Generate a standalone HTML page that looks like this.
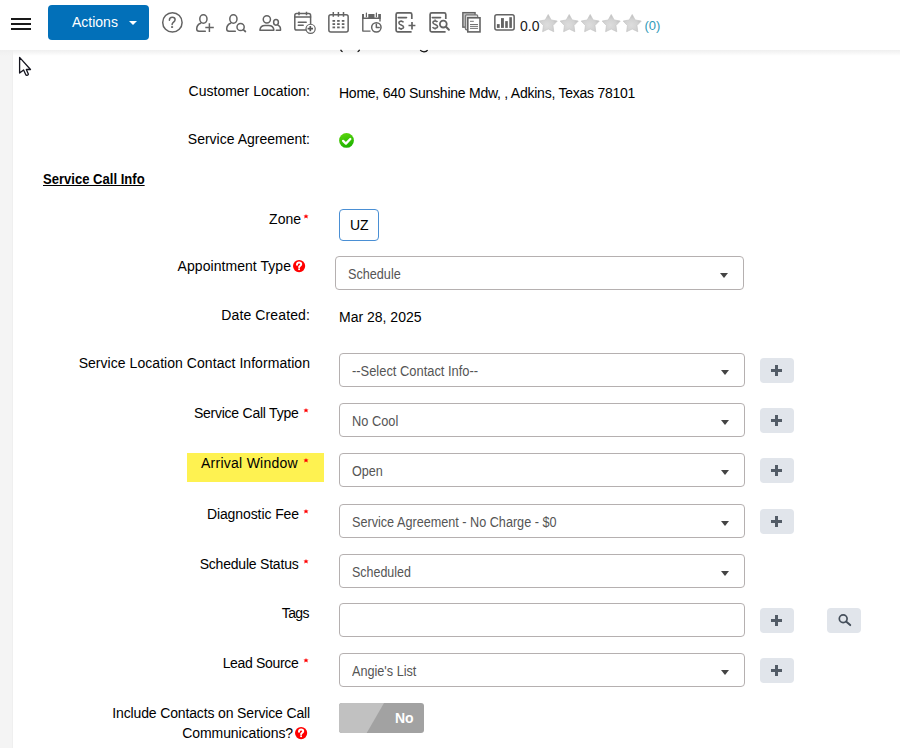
<!DOCTYPE html>
<html><head><meta charset="utf-8">
<style>
*{box-sizing:border-box;margin:0;padding:0}
html,body{width:900px;height:748px;overflow:hidden;background:#fff;font-family:"Liberation Sans",sans-serif;color:#000}
.a{position:absolute;white-space:nowrap}
#strip{position:absolute;left:0;top:50px;width:13px;height:698px;background:#f4f4f4;border-right:1px solid #efefef}
#hdr{position:absolute;left:0;top:0;width:900px;height:50px;background:#fff;z-index:5}
#shadow{position:absolute;left:0;top:50px;width:900px;height:6px;background:linear-gradient(#efefef,rgba(255,255,255,0));z-index:4}
.ham{position:absolute;left:11px;width:20px;height:2px;background:#1a1a1a}
#act{position:absolute;left:48px;top:5px;width:101px;height:35px;background:#0270b9;border-radius:4px}
.lbl{position:absolute;font-size:14px;line-height:20px;text-align:right;white-space:nowrap}
.val{position:absolute;font-size:14px;line-height:20px;white-space:nowrap}
.req{position:absolute;left:303px;width:6px;height:5px}
.sel{position:absolute;left:339px;width:406px;height:34px;border:1px solid #b5b0b0;border-radius:4px;background:#fff}
.sel .t{position:absolute;left:12px;top:7px;font-size:14px;line-height:20px;color:#555;white-space:nowrap;transform-origin:0 0}
.sel .c{position:absolute;left:381px;top:16px;width:0;height:0;border-left:4px solid transparent;border-right:4px solid transparent;border-top:5px solid #444}
.pb{position:absolute;left:760px;width:34px;height:25px;background:#e1e5eb;border-radius:4px}
.pb.p:before{content:"";position:absolute;left:11px;top:11px;width:11px;height:3px;background:#535c67}
.pb.p:after{content:"";position:absolute;left:15px;top:7px;width:3px;height:11px;background:#535c67}
.qi{position:absolute;width:13px;height:13px}
</style></head>
<body>
<div id="strip"></div>
<svg class="a" style="left:338px;top:48px;z-index:6" width="92" height="6" viewBox="338 48 92 6" fill="none" stroke="#111" stroke-width="1.2">
  <path d="M340.6 49.8Q341.2 51.2 342.6 51.8"/>
  <path d="M359.6 49.8Q359 51.2 357.6 51.8"/>
  <path d="M420.2 50.2Q421.5 51.8 424 51.8Q426.5 51.8 427.6 50.2"/>
</svg>
<div id="shadow"></div>
<svg class="a" style="left:14px;top:54px;z-index:6" width="24" height="24" viewBox="14 54 24 24"><path d="M19.6 57.4V73.1L23.6 69.9L25.9 74.9Q26.2 75.5 26.9 75.3L28 74.8Q28.6 74.5 28.3 73.9L26.3 69.5H30.5Z" fill="#fff" stroke="#15151f" stroke-width="1.3" stroke-linejoin="round"/></svg>
<div id="hdr">
  <div class="ham" style="top:18px"></div>
  <div class="ham" style="top:23px"></div>
  <div class="ham" style="top:28px"></div>
  <div id="act">
    <div class="a" style="left:24px;top:7px;font-size:14px;line-height:20px;color:#fff">Actions</div>
    <div class="a" style="left:81px;top:16px;width:0;height:0;border-left:4px solid transparent;border-right:4px solid transparent;border-top:4px solid #fff"></div>
  </div>
  <svg class="a" style="left:0;top:0" width="530" height="50" viewBox="0 0 530 50" fill="none" stroke="#636363" stroke-width="1.5" stroke-linecap="round" stroke-linejoin="round">
    <circle cx="172.4" cy="22.4" r="9.7"/>
    <path d="M169.4 20.2C169.4 18.3 170.7 17.3 172.3 17.3C174 17.3 175.1 18.4 175.1 19.8C175.1 21.6 173.3 22.1 172.5 23.3L172.1 24.5"/>
    <rect x="171.1" y="26.2" width="2" height="1.7" fill="#636363" stroke="none"/>
    <ellipse cx="203.4" cy="19" rx="3.6" ry="4.2"/>
    <path d="M200.6 23.3C197.6 24.6 196.7 27 196.7 29C196.7 30.5 197.5 31.2 199 31.2L205.3 31.2"/>
    <path d="M205.3 27.4H213.8M209.4 23.2V31.9" stroke-width="1.5" stroke-linecap="butt"/>
    <ellipse cx="233.4" cy="19" rx="3.6" ry="4.2"/>
    <path d="M230.6 23.3C227.6 24.6 226.7 27 226.7 29C226.7 30.5 227.5 31.2 229 31.2L235.3 31.2"/>
    <circle cx="240.6" cy="27" r="3.6"/>
    <path d="M243.3 29.7L245.4 31.5" stroke-width="1.7"/>
    <circle cx="266.85" cy="19.35" r="3.6"/>
    <path d="M259.9 30.2C260.2 27.3 262.4 25.6 265 25.6H268.6C271.3 25.6 273.6 27.3 273.9 30.2Z"/>
    <ellipse cx="276" cy="22.35" rx="2.4" ry="2.8"/>
    <path d="M277.8 25.1C279.6 25.7 280.5 27.3 280.5 29V30.3H276.3"/>
    <rect x="294.8" y="13.6" width="15.8" height="16.5" rx="1.8"/>
    <path d="M294.8 17H310.6M298.3 22.2H306.2M298.3 25.3H303.2"/><path d="M299 11.8V15.3M306.5 11.8V15.3" stroke-linecap="butt"/>
    <circle cx="310.6" cy="28.85" r="4.6" fill="#fff" stroke-width="1.2"/>
    <path d="M307.6 28.6H313M310.3 26.1V31.3" stroke-width="1.7" stroke="#555" stroke-linecap="butt"/>
    <rect x="328.85" y="14.75" width="19.3" height="17.2" rx="2" stroke-width="1.5"/>
    <path d="M333.3 12.1V16.8M338.4 12.1V16.8M343.5 12.1V16.8" stroke-width="1.5" stroke-linecap="butt"/>
    <g fill="#636363" stroke="none">
      <rect x="332.5" y="20" width="2.6" height="1.8"/><rect x="337.1" y="20" width="2.6" height="1.8"/><rect x="341.8" y="20" width="2.6" height="1.8"/>
      <rect x="332.5" y="23.2" width="2.6" height="1.8"/><rect x="337.1" y="23.2" width="2.6" height="1.8"/><rect x="341.8" y="23.2" width="2.6" height="1.8"/>
      <rect x="332.5" y="26.5" width="2.6" height="1.8"/><rect x="337.1" y="26.5" width="2.6" height="1.8"/><rect x="341.8" y="26.5" width="2.6" height="1.8"/>
    </g>
    <g fill="#636363" stroke="none">
      <path d="M362.1 14H364V18.7H362.1Z M368.3 14H374.5V17.6H368.3Z M378.2 14H380.7V18.7H378.2Z M362.1 17.6H380.7V18.9H362.1Z"/>
    </g>
    <path d="M366.4 13V16.7M376.4 13V16.7" stroke-width="1.2"/>
    <path d="M362.8 14V31.1H370.5M380 14V21.4" stroke-width="1.4" stroke-linecap="butt"/>
    <circle cx="376.35" cy="27.35" r="4.7"/>
    <path d="M376.35 24.2V27.5H379.2"/>
    <path d="M411.8 19V14.4Q411.8 12.8 410.2 12.8H397.7Q396.1 12.8 396.1 14.4V30.2Q396.1 31.8 397.7 31.8H411.6" stroke-width="1.7" stroke-linecap="butt"/>
    <path d="M398.3 17.6H406.5" stroke-width="1.6"/>
    <path d="M403.5 22.4C403 21.6 402.1 21.3 401.1 21.3C399.7 21.3 398.9 22 398.9 23C398.9 25.4 403.6 24.5 403.6 27C403.6 28.1 402.6 28.7 401.1 28.7C400 28.7 399.1 28.3 398.6 27.5M401.1 20.3V21.6M401.1 28.4V30" stroke-width="1.5" stroke-linecap="butt"/>
    <path d="M408.5 25.5H415.4M412 22.1V29.5" stroke-width="1.7" stroke-linecap="butt"/>
    <path d="M445.8 19V14.4Q445.8 12.8 444.2 12.8H431.7Q430.1 12.8 430.1 14.4V30.2Q430.1 31.8 431.7 31.8H445.6" stroke-width="1.7" stroke-linecap="butt"/>
    <path d="M432.3 17.6H440.5" stroke-width="1.6"/>
    <path d="M437.5 22C437 21.2 436.1 20.9 435.1 20.9C433.7 20.9 432.9 21.6 432.9 22.6C432.9 25 437.6 24.1 437.6 26.6C437.6 27.7 436.6 28.3 435.1 28.3C434 28.3 433.1 27.9 432.6 27.1M435.1 19.5V21.2M435.1 28V29.6" stroke-width="1.5" stroke-linecap="butt"/>
    <circle cx="443.3" cy="24.1" r="3.4" stroke-width="1.8"/>
    <path d="M446 26.8L448.9 29.7" stroke-width="2"/>
    <rect x="462.85" y="12.65" width="12.2" height="14.5" fill="#c4c4c4" stroke-width="1.4" stroke-linecap="butt" stroke-linejoin="miter"/>
    <rect x="465.45" y="14.95" width="12.2" height="14.8" rx="1" fill="#dcdcdc" stroke="#7a7a7a" stroke-width="1.3" stroke-linecap="butt" stroke-linejoin="miter"/>
    <rect x="467.8" y="17.8" width="12.2" height="14.1" fill="#fff" stroke-width="1.6" stroke-linecap="butt" stroke-linejoin="miter"/>
    <path d="M470.4 21.3H473.4M470.4 24.5H477.6M470.4 26.4H477.6M470.4 28.4H477.6" stroke-width="0.9"/>
    <rect x="494.85" y="14.75" width="19.3" height="15.3" rx="2" stroke-width="1.5"/>
    <g fill="#636363" stroke="none"><rect x="496.9" y="24.1" width="2.8" height="3.8"/><rect x="501" y="18.1" width="2.9" height="9.8"/><rect x="505.2" y="21.1" width="2.6" height="6.8"/><rect x="509.3" y="17.2" width="2.6" height="10.7"/></g>
  </svg>
  <div class="a" style="left:520px;top:16px;font-size:14px;line-height:20px;color:#1a1a1a">0.0</div>
  <svg class="a" style="left:536px;top:12px" width="110" height="24" viewBox="536 12 110 24">
    <defs>
      <radialGradient id="sg" cx="0.45" cy="0.62" r="0.6"><stop offset="0" stop-color="#dddddd"/><stop offset="0.6" stop-color="#d2d2d2"/><stop offset="1" stop-color="#bdbdbd"/></radialGradient>
      <path id="st" d="M0 -9.5L2.94 -4.05L9.04 -2.94L4.76 1.55L5.59 7.69L0 5L-5.59 7.69L-4.76 1.55L-9.04 -2.94L-2.94 -4.05Z" fill="url(#sg)" stroke="#c6c6c6" stroke-width="0.7" stroke-linejoin="round"/>
    </defs>
    <use href="#st" x="548.2" y="24"/>
    <use href="#st" x="569.2" y="24"/>
    <use href="#st" x="590.2" y="24"/>
    <use href="#st" x="611.2" y="24"/>
    <use href="#st" x="632.2" y="24"/>
  </svg>
  <div class="a" style="left:644.5px;top:16px;font-size:13px;line-height:20px;color:#2f9ab8">(0)</div>
</div>

<div class="lbl" style="right:590px;top:81px">Customer Location:</div>
<div class="val" style="left:339px;top:83px;letter-spacing:-0.245px">Home, 640 Sunshine Mdw, , Adkins, Texas 78101</div>

<div class="lbl" style="right:590px;top:129px">Service Agreement:</div>
<svg class="a" style="left:338px;top:132px" width="17" height="17" viewBox="338 132 17 17">
  <defs><linearGradient id="gg" x1="0" y1="0" x2="0.3" y2="1"><stop offset="0" stop-color="#62d80e"/><stop offset="1" stop-color="#1fb400"/></linearGradient></defs>
  <circle cx="346.5" cy="140.45" r="7.4" fill="url(#gg)"/>
  <path d="M343.1 140.9L345.9 143.6L350.3 139" fill="none" stroke="#fff" stroke-width="2.3" stroke-linecap="round" stroke-linejoin="round"/>
</svg>

<div class="a" style="left:43px;top:169px;font-size:14px;line-height:20px;font-weight:bold;text-decoration:underline;transform:scaleX(0.933);transform-origin:0 0">Service Call Info</div>

<div class="lbl" style="right:599px;top:209px">Zone</div>
<svg class="req" style="top:214.0px" width="6" height="5" viewBox="0 0 6 5"><path d="M3 0L3.7 1.6L5.5 1.5L4.2 2.8L4.9 4.6L3 3.6L1.1 4.6L1.8 2.8L0.5 1.5L2.3 1.6Z" fill="#f00"/></svg>
<div class="a" style="left:339px;top:209px;width:40px;height:32px;border:1px solid #4a8fd4;border-radius:4px"><div class="a" style="left:10px;top:5px;font-size:14px;line-height:20px">UZ</div></div>

<div class="lbl" style="right:609px;top:256px;letter-spacing:0.05px">Appointment Type</div>
<svg class="qi" style="left:293.3px;top:259.8px" width="13" height="13" viewBox="0 0 13 13"><circle cx="6.1" cy="6.1" r="6.1" fill="#f00"/><path d="M4 4.7C4 3.2 4.9 2.5 6.1 2.5C7.3 2.5 8.2 3.3 8.2 4.3C8.2 5.6 6.5 5.8 6.1 7.1" fill="none" stroke="#fff" stroke-width="2" stroke-linecap="round"/><rect x="5.2" y="8.4" width="1.8" height="1.7" fill="#fff"/></svg>
<div class="sel" style="left:335px;width:409px;top:256px"><div class="t" style="transform:scaleX(0.903)">Schedule</div><div class="c" style="left:384px"></div></div>

<div class="lbl" style="right:590px;top:305px;letter-spacing:0.12px">Date Created:</div>
<div class="val" style="left:339px;top:307px">Mar 28, 2025</div>

<div class="lbl" style="right:590px;top:353px;letter-spacing:0.05px">Service Location Contact Information</div>
<div class="sel" style="top:353px"><div class="t" style="transform:scaleX(0.921)">--Select Contact Info--</div><div class="c"></div></div>
<div class="pb p" style="top:358px"></div>

<div class="lbl" style="right:601.5px;top:403px;letter-spacing:-0.24px">Service Call Type</div>
<svg class="req" style="top:408.0px" width="6" height="5" viewBox="0 0 6 5"><path d="M3 0L3.7 1.6L5.5 1.5L4.2 2.8L4.9 4.6L3 3.6L1.1 4.6L1.8 2.8L0.5 1.5L2.3 1.6Z" fill="#f00"/></svg>
<div class="sel" style="top:403px"><div class="t" style="transform:scaleX(0.914)">No Cool</div><div class="c"></div></div>
<div class="pb p" style="top:408px"></div>

<div class="a" style="left:187px;top:453px;width:137px;height:29px;background:#fef251"></div>
<div class="lbl" style="right:602px;top:453px;letter-spacing:0.26px">Arrival Window</div>
<svg class="req" style="top:458.0px" width="6" height="5" viewBox="0 0 6 5"><path d="M3 0L3.7 1.6L5.5 1.5L4.2 2.8L4.9 4.6L3 3.6L1.1 4.6L1.8 2.8L0.5 1.5L2.3 1.6Z" fill="#f00"/></svg>
<div class="sel" style="top:453px"><div class="t" style="transform:scaleX(0.9)">Open</div><div class="c"></div></div>
<div class="pb p" style="top:458px"></div>

<div class="lbl" style="right:601px;top:504px;letter-spacing:-0.09px">Diagnostic Fee</div>
<svg class="req" style="top:509.0px" width="6" height="5" viewBox="0 0 6 5"><path d="M3 0L3.7 1.6L5.5 1.5L4.2 2.8L4.9 4.6L3 3.6L1.1 4.6L1.8 2.8L0.5 1.5L2.3 1.6Z" fill="#f00"/></svg>
<div class="sel" style="top:504px"><div class="t" style="transform:scaleX(0.903)">Service Agreement - No Charge - $0</div><div class="c"></div></div>
<div class="pb p" style="top:509px"></div>

<div class="lbl" style="right:601.5px;top:554px;letter-spacing:-0.21px">Schedule Status</div>
<svg class="req" style="top:559.0px" width="6" height="5" viewBox="0 0 6 5"><path d="M3 0L3.7 1.6L5.5 1.5L4.2 2.8L4.9 4.6L3 3.6L1.1 4.6L1.8 2.8L0.5 1.5L2.3 1.6Z" fill="#f00"/></svg>
<div class="sel" style="top:554px"><div class="t" style="transform:scaleX(0.891)">Scheduled</div><div class="c"></div></div>

<div class="lbl" style="right:591px;top:603px;letter-spacing:-0.57px">Tags</div>
<div class="sel" style="top:603px"></div>
<div class="pb p" style="top:608px"></div>
<div class="pb" style="left:827px;top:608px">
  <svg class="a" style="left:0;top:0" width="34" height="25" viewBox="827 608 34 25"><circle cx="843.2" cy="618.75" r="3.9" fill="none" stroke="#454f5b" stroke-width="1.7"/><path d="M846.1 621.6L850.2 625.1" stroke="#454f5b" stroke-width="2" stroke-linecap="round"/></svg>
</div>

<div class="lbl" style="right:601.5px;top:653px;letter-spacing:-0.32px">Lead Source</div>
<svg class="req" style="top:658.0px" width="6" height="5" viewBox="0 0 6 5"><path d="M3 0L3.7 1.6L5.5 1.5L4.2 2.8L4.9 4.6L3 3.6L1.1 4.6L1.8 2.8L0.5 1.5L2.3 1.6Z" fill="#f00"/></svg>
<div class="sel" style="top:653px"><div class="t" style="transform:scaleX(0.904)">Angie's List</div><div class="c"></div></div>
<div class="pb p" style="top:658px"></div>

<div class="lbl" style="right:590px;top:703px;letter-spacing:-0.145px">Include Contacts on Service Call</div>
<div class="lbl" style="right:607px;top:723px;letter-spacing:-0.09px">Communications?</div>
<svg class="qi" style="left:295.0px;top:726.5px" width="13" height="13" viewBox="0 0 13 13"><circle cx="6.1" cy="6.1" r="6.1" fill="#f00"/><path d="M4 4.7C4 3.2 4.9 2.5 6.1 2.5C7.3 2.5 8.2 3.3 8.2 4.3C8.2 5.6 6.5 5.8 6.1 7.1" fill="none" stroke="#fff" stroke-width="2" stroke-linecap="round"/><rect x="5.2" y="8.4" width="1.8" height="1.7" fill="#fff"/></svg>
<div class="a" style="left:339px;top:703px;width:85px;height:30px;border-radius:3px;overflow:hidden;background:#a2a2a2"><svg class="a" style="left:0;top:0" width="85" height="30"><polygon points="0,0 45,0 27.7,30 0,30" fill="#c1c1c1"/></svg><div class="a" style="left:56px;top:5px;font-size:14px;line-height:20px;font-weight:bold;color:#fff">No</div></div>
</body></html>
